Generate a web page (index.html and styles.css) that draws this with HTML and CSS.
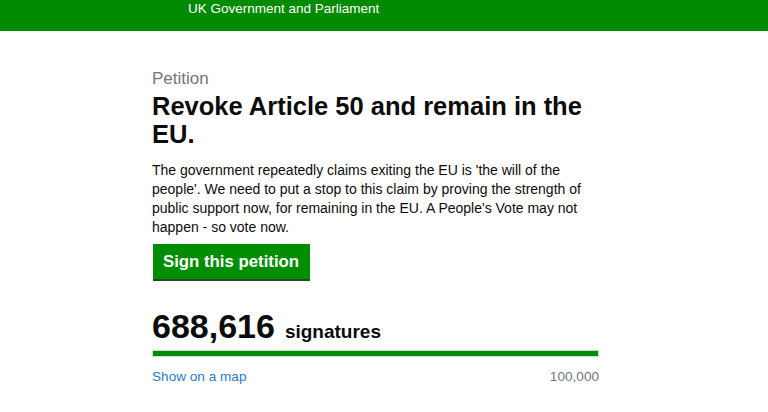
FILE: index.html
```html
<!DOCTYPE html>
<html lang="en">
<head>
<meta charset="utf-8">
<title>Revoke Article 50 and remain in the EU.</title>
<link rel="stylesheet" href="styles.css">
</head>
<body>
<header class="site-header">
  <span class="site-title">UK Government and Parliament</span>
</header>
<main class="content">
  <p class="kicker">Petition</p>
  <h1 class="title">Revoke Article 50 and remain in the EU.</h1>
  <p class="summary">The government repeatedly claims exiting the EU is 'the will of the people'. We need to put a stop to this claim by proving the strength of public support now, for remaining in the EU. A People's Vote may not happen - so vote now.</p>
  <a class="button" href="#">Sign this petition</a>
  <div class="count">
    <span class="count-number">688,616</span>
    <span class="count-label">signatures</span>
  </div>
  <div class="progress"><div class="progress-fill" style="width:100%"></div></div>
  <div class="meta">
    <a class="map-link" href="#">Show on a map</a>
    <span class="threshold">100,000</span>
  </div>
</main>
</body>
</html>
```
FILE: styles.css
```css
html, body {
  margin: 0;
  padding: 0;
  background: #ffffff;
}
body {
  font-family: "Liberation Sans", Arial, sans-serif;
  color: #0b0c0c;
}
.site-header {
  background: #008a00;
  height: 31px;
  padding-left: 188px;
  box-sizing: border-box;
}
.site-title {
  display: block;
  color: #ffffff;
  font-size: 13.5px;
  line-height: 18px;
}
.content {
  margin-left: 152px;
  width: 447px;
  padding-top: 38px;
  display: flex;
  flex-direction: column;
}
.kicker {
  margin: 0;
  color: #6f777b;
  font-size: 17px;
  line-height: 20px;
}
.title {
  margin: 3px 0 0;
  font-size: 25.5px;
  line-height: 28px;
  font-weight: bold;
}
.summary {
  margin: 13px 0 0;
  font-size: 14px;
  line-height: 19px;
}
.button {
  align-self: flex-start;
  margin-top: 7px;
  margin-left: 1px;
  background: #008d00;
  color: #ffffff;
  font-weight: bold;
  font-size: 16.8px;
  line-height: 23px;
  padding: 6px 11px 6px 10px;
  text-decoration: none;
  box-shadow: 0 2px 0 #1f4d1f;
}
.count {
  margin-top: 28px;
  display: flex;
  align-items: baseline;
  gap: 10px;
}
.count-number {
  font-size: 34px;
  line-height: 38px;
  font-weight: bold;
}
.count-label {
  font-size: 19px;
  font-weight: bold;
}
.progress {
  margin-top: 5px;
  height: 7px;
  background: #dee0e2;
  box-sizing: border-box;
  border: 1px solid #c8e0c8;
}
.progress-fill {
  height: 100%;
  background: #008d00;
}
.meta {
  margin-top: 11px;
  display: flex;
  justify-content: space-between;
  font-size: 13.6px;
  line-height: 18px;
}
.map-link {
  color: #2b7cc4;
  text-decoration: none;
}
.threshold {
  color: #6f777b;
}
```
